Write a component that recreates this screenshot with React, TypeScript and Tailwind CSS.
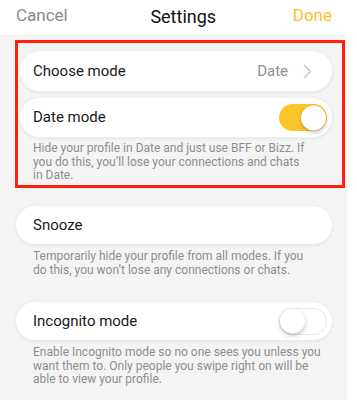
import React from 'react';

const Toggle: React.FC<{ on: boolean }> = ({ on }) => (
  <div
    className={`relative w-[48px] h-[27px] rounded-full ${on ? 'bg-[#fcc52b]' : 'bg-white border-[1.5px] border-[#e6e6e6]'}`}
  >
    <div
      className={`absolute top-1/2 -translate-y-1/2 w-[25px] h-[25px] rounded-full bg-white shadow-[0_2px_4px_rgba(0,0,0,0.25)] ${on ? 'right-[1px]' : 'left-[0px]'}`}
    />
  </div>
);

const Card: React.FC<{ className?: string; children: React.ReactNode }> = ({ className = '', children }) => (
  <div
    className={`flex items-center justify-between bg-white rounded-full border border-[#ededed] shadow-[0_1px_3px_rgba(0,0,0,0.06)] ${className}`}
  >
    {children}
  </div>
);

const Note: React.FC<{ lines: string[]; className?: string }> = ({ lines, className = '' }) => (
  <p className={`text-[12px] leading-[13.5px] text-[#8e8e8e] whitespace-nowrap ${className}`}>
    {lines.map((l, i) => (
      <React.Fragment key={i}>
        {l}
        {i < lines.length - 1 && <br />}
      </React.Fragment>
    ))}
  </p>
);

export default function App() {
  return (
    <div className="w-[357px] h-[400px] bg-white overflow-hidden flex flex-col" style={{ fontFamily: 'Roboto, "Noto Sans", sans-serif' }}>
      <header className="h-[35px] flex items-center justify-between pl-[16px] pr-[25px] pb-[3px] shrink-0">
        <span className="text-[17px] text-[#8a8a8a]">Cancel</span>
        <span className="text-[18px] text-[#111] ml-[6px]">Settings</span>
        <span className="text-[17px] text-[#fcc21f]">Done</span>
      </header>

      <main className="w-[347px] flex-1 bg-[#f4f4f4] pt-[5px]">
        <section className="ml-[15px] w-[330px] border-[3px] border-[#ff1f0a] pt-[7px] pl-[1px] pr-[9px] h-[148px]">
          <div className="flex flex-col gap-[5px]">
            <Card className="h-[42px] pl-[13px] pr-[20px]">
              <span className="text-[15px] text-[#1a1a1a]">Choose mode</span>
              <span className="flex items-center gap-[15px] text-[15px] text-[#8e8e8e]">
                Date
                <svg width="9" height="15" viewBox="0 0 9 15" fill="none">
                  <path d="M1.5 1.5 L7.5 7.5 L1.5 13.5" stroke="#d0d0d4" strokeWidth="1.8" strokeLinecap="round" strokeLinejoin="round" />
                </svg>
              </span>
            </Card>
            <Card className="h-[41px] pl-[13px] pr-[5px]">
              <span className="text-[15px] text-[#1a1a1a]">Date mode</span>
              <Toggle on />
            </Card>
          </div>
          <Note
            className="mt-[4px] pl-[14px]"
            lines={[
              'Hide your profile in Date and just use BFF or Bizz. If',
              'you do this, you\u2019ll lose your connections and chats',
              'in Date.',
            ]}
          />
        </section>

        <div className="ml-[15px] w-[318px] mt-[17px]">
          <Card className="h-[40px] pl-[17px]">
            <span className="text-[15px] text-[#1a1a1a]">Snooze</span>
          </Card>
        </div>
        <Note
          className="mt-[5px] pl-[33px]"
          lines={[
            'Temporarily hide your profile from all modes. If you',
            'do this, you won\u2019t lose any connections or chats.',
          ]}
        />

        <div className="ml-[15px] w-[318px] mt-[24px]">
          <Card className="h-[40px] pl-[17px] pr-[5px]">
            <span className="text-[15px] text-[#1a1a1a]">Incognito mode</span>
            <Toggle on={false} />
          </Card>
        </div>
        <Note
          className="mt-[5px] pl-[33px]"
          lines={[
            'Enable Incognito mode so no one sees you unless you',
            'want them to. Only people you swipe right on will be',
            'able to view your profile.',
          ]}
        />
      </main>
    </div>
  );
}
